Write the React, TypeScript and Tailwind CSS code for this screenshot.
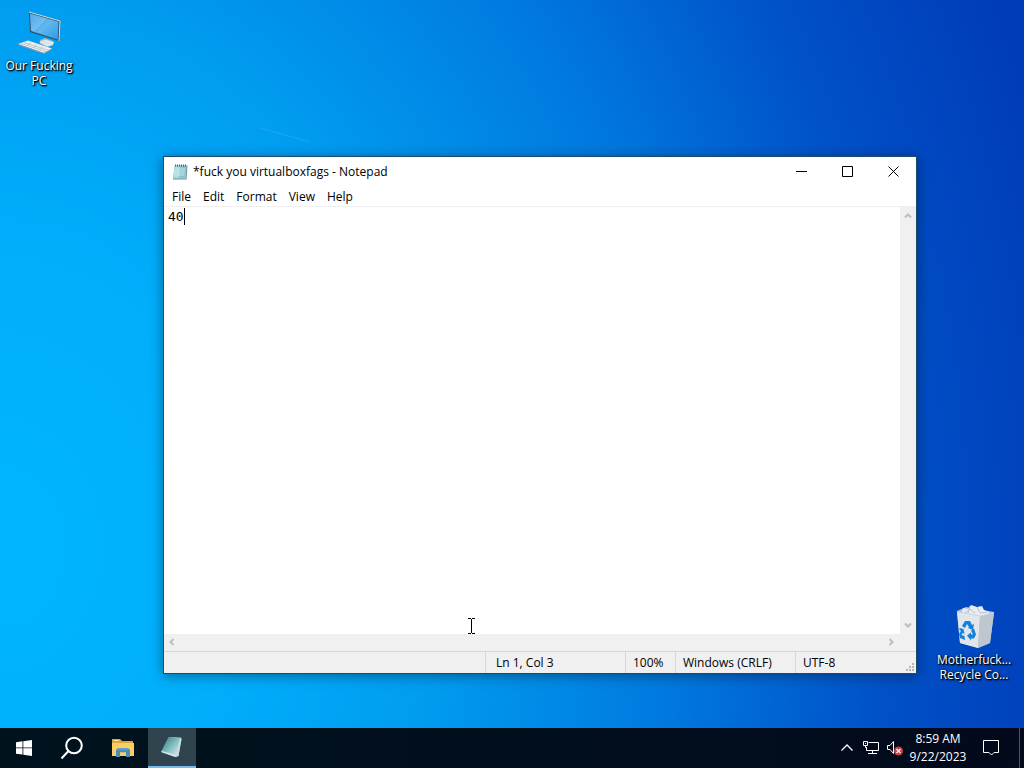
import React from "react";

const menuItems = ["File", "Edit", "Format", "View", "Help"];

function ComputerIcon() {
    return (
        <svg viewBox="0 0 48 48" className="w-12 h-12" aria-hidden="true">
            <defs>
                <linearGradient id="screen" x1="0" y1="0" x2="1" y2="1">
                    <stop offset="0" stopColor="#2592de" />
                    <stop offset="0.5" stopColor="#62b6ee" />
                    <stop offset="1" stopColor="#2d9be6" />
                </linearGradient>
            </defs>
            <path d="M25 32l5-2 8 3v4l-5 2-8-3z" fill="#a9b5be" />
            <path d="M24 34l6-2.500 9 2.500-1 3-6 1.500z" fill="#dfe5ea" />
            <path d="M14 4l31 9-1 20-29-9z" fill="#2c4f6a" />
            <path d="M14 4l31 9-1 20" fill="none" stroke="#d5dccb" strokeWidth="1" />
            <path d="M15 5.500l28.500 8.300-.8 17.700-26.700-8.500z" fill="url(#screen)" />
            <path d="M15 5.500l17 5-13 13-3-1z" fill="#a5d9fa" opacity=".35" />
            <path d="M3 36l10-3.500 24 8-8 4.500z" fill="#eceeef" />
            <path d="M3 36l26 9 8-4.500v1l-8 4.500L3 37z" fill="#8f9aa3" />
            <path d="M6 35.500l25 8M9 34.500l25 8M12 37.500l4-3M18 40l4-3M24 42l4-3" stroke="#b0b7bd" strokeWidth=".7" />
        </svg>
    );
}

function RecycleBinIcon() {
    return (
        <svg viewBox="0 0 48 48" className="w-12 h-12" aria-hidden="true">
            <path d="M7 9l9-4 28 5-4 31-12 5-18-5z" fill="#aebfe0" />
            <path d="M11 12l2-6 5 1 3-4 6 2 5-1 2 4 5 2-1 6-11 4z" fill="#e9edf2" />
            <path d="M15 11l5-4 5 4M27 5l3 6 7-1M20 4l-2 7" stroke="#b5c2d2" fill="none" />
            <path d="M7 10l23 4-2 32-18-5z" fill="#e2e5ea" />
            <path d="M30 14l14-3-4 30-12 5z" fill="#c0c6d0" />
            <path d="M7 9.500l23 4.500 14-3.500" fill="none" stroke="#c6d4ea" />
            <g fill="#1482dc">
                <path d="M12 24l3-5h5l2 4 2-1-1 6-5-2 1-1-2-3-2 4z" />
                <path d="M9.500 26l4 1 1 5-2-1-1 2 3 1 .5 4-5-2-1-4 2-3-1.500-1z" />
                <path d="M17 33.500l4-3v2h2l-2-4 3-2 2 6-2 4h-3v2z" />
            </g>
        </svg>
    );
}

function NotepadIcon() {
    return (
        <svg viewBox="0 0 16 16" className="w-4 h-4" aria-hidden="true">
            <path d="M3 1.500h12.500L14.500 15.500H1z" fill="#6c8f97" />
            <path d="M2.500 2h12L13.500 14.500H1z" fill="#a9dce1" />
            <path d="M8 2h6.500l-1 12.500H7z" fill="#86c6ce" />
            <path d="M3 5h10M2.800 7h10M2.500 9h10M2.300 11h10" stroke="#d8f2f3" strokeWidth=".7" />
            <path d="M3 1.500h12" stroke="#51656b" strokeWidth="2" strokeDasharray="1 1" />
        </svg>
    );
}

function WindowControls() {
    const button = "w-[46px] flex items-center justify-center hover:bg-gray-200";
    return (
        <div className="flex self-start h-[29px]">
            <button aria-label="Minimize" className={button}>
                <svg width="11" height="11" viewBox="0 0 11 11" stroke="#000"><path d="M0 5.500h11" /></svg>
            </button>
            <button aria-label="Maximize" className={button}>
                <svg width="11" height="11" viewBox="0 0 11 11" fill="none" stroke="#000"><path d="M.5.500h10v10H.5z" /></svg>
            </button>
            <button aria-label="Close" className={button}>
                <svg width="11" height="11" viewBox="0 0 11 11" stroke="#000"><path d="M.5.500l10 10M10.500.500l-10 10" /></svg>
            </button>
        </div>
    );
}

function ScrollArrow({ label, d }: { label: string; d: string }) {
    return (
        <button aria-label={label} className="w-4 h-4 flex items-center justify-center">
            <svg width="8" height="8" viewBox="0 0 8 8" fill="none" stroke="#bdbdbd" strokeWidth="2">
                <path d={d} />
            </svg>
        </button>
    );
}

function DesktopIcon({ lines, children }: { lines: string[]; children: React.ReactNode }) {
    return (
        <button className="w-[76px] flex flex-col items-center gap-0.5 text-white leading-[15px] [text-shadow:1px_1px_2px_#000,1px_1px_1px_#000,0_0_3px_rgba(0,0,0,0.5)]">
            {children}
            <span>
                {lines.map((line) => (
                    <span key={line} className="block whitespace-nowrap">{line}</span>
                ))}
            </span>
        </button>
    );
}

function NotepadWindow() {
    return (
        <section className="absolute left-[163px] right-[107px] top-[156px] bottom-[54px] flex flex-col bg-white border border-[#1b4a6b] text-black shadow-[0_2px_12px_rgba(0,0,0,0.4)]">
            <header className="h-[30px] flex items-center">
                <span className="pl-2 pr-[5px]"><NotepadIcon /></span>
                <h1 className="flex-1 whitespace-nowrap">*fuck you virtualboxfags - Notepad</h1>
                <WindowControls />
            </header>
            <nav className="h-5 pl-0.5 flex items-center border-b border-[#f0f0f0]">
                {menuItems.map((item) => (
                    <button key={item} className="h-full px-1.5 hover:bg-sky-100">{item}</button>
                ))}
            </nav>
            <div className="flex-1 flex min-h-0">
                <div className="flex-1 relative">
                    <textarea
                        aria-label="Text editor"
                        defaultValue="40"
                        spellCheck={false}
                        className="block w-full h-full resize-none outline-none overflow-hidden pl-1 pt-px font-['DejaVu_Sans_Mono',monospace] text-[13px] leading-[17px] caret-transparent"
                    />
                    <span className="absolute left-5 top-px w-px h-[17px] bg-black" />
                    <svg className="absolute left-[304px] bottom-0 w-[7px] h-4" viewBox="0 0 7 16" fill="none" stroke="#000">
                        <path d="M0 .5h3M4 .5h3M3.500 1v14M0 15.500h3M4 15.500h3" />
                    </svg>
                </div>
                <div className="w-4 flex flex-col justify-between bg-[#f0f0f0] py-px">
                    <ScrollArrow label="Scroll up" d="M1 5.500l3-3 3 3" />
                    <ScrollArrow label="Scroll down" d="M1 2.500l3 3 3-3" />
                </div>
            </div>
            <div className="h-[17px] flex justify-between bg-[#f0f0f0] pr-[17px]">
                <ScrollArrow label="Scroll left" d="M5.500 1l-3 3 3 3" />
                <ScrollArrow label="Scroll right" d="M2.500 1l3 3-3 3" />
            </div>
            <footer className="h-[22px] flex leading-[21px] bg-[#f0f0f0] border-t border-[#d7d7d7] whitespace-nowrap">
                <span className="flex-1" />
                <span className="w-[140px] pl-2.5 border-l border-[#d7d7d7]">Ln 1, Col 3</span>
                <span className="w-[50px] pl-[7px] border-l border-[#d7d7d7]">100%</span>
                <span className="w-[120px] pl-[7px] border-l border-[#d7d7d7]">Windows (CRLF)</span>
                <span className="w-[121px] pl-[7px] border-l border-[#d7d7d7] flex justify-between items-end">
                    UTF-8
                    <svg width="11" height="11" viewBox="0 0 11 11" fill="#b8b8b8">
                        <path d="M7 1h2v2H7zM4 4h2v2H4zM7 4h2v2H7zM1 7h2v2H1zM4 7h2v2H4zM7 7h2v2H7z" />
                    </svg>
                </span>
            </footer>
        </section>
    );
}

function Taskbar() {
    return (
        <footer className="h-10 flex justify-between bg-gradient-to-r from-[#00131d] to-[#020a1c] text-white">
            <div className="flex gap-0.5">
                <div className="flex">
                    <button aria-label="Start" className="w-12 flex items-center justify-center">
                        <svg width="16" height="16" viewBox="0 0 16 16" fill="#fff">
                            <path d="M0 2.300l6.500-1v6.200H0zM7.300 1.200L16 0v7.500H7.300zM0 8.300h6.500v6.300L0 13.700zM7.300 8.300H16V16l-8.700-1.300z" />
                        </svg>
                    </button>
                    <button aria-label="Search" className="w-12 flex items-center justify-center">
                        <svg width="24" height="24" viewBox="0 0 24 24" fill="none" stroke="#fff" strokeWidth="2">
                            <circle cx="14" cy="9.500" r="7.800" />
                            <path d="M8.500 15L1.500 22.500" />
                        </svg>
                    </button>
                </div>
                <button aria-label="File Explorer" className="w-12 flex items-center justify-center">
                    <svg width="24" height="20" viewBox="0 0 24 20">
                        <path d="M2 1h8l2 2h11v15H2z" fill="#e0a63a" />
                        <path d="M4 2h5v1H4z" fill="#fbe3a0" />
                        <path d="M2 5h22v13H2z" fill="#f8cf66" />
                        <path d="M6 12l2-2h10l2 2v7h-4v-4.500h-6V19H6z" fill="#4a8dbd" />
                        <path d="M8 10h10v2H8z" fill="#5f9fca" />
                        <path d="M10 14.500h6V18h-6z" fill="#f8cf66" />
                    </svg>
                </button>
                <button aria-label="Notepad" className="w-12 flex items-center justify-center bg-[#2f444f] border-b-2 border-[#76b9ed]">
                    <svg width="24" height="24" viewBox="0 0 24 24">
                        <defs>
                            <linearGradient id="glass" x1="0" y1="0" x2="1" y2="1">
                                <stop offset="0" stopColor="#2c7479" />
                                <stop offset="0.5" stopColor="#7fbcc0" />
                                <stop offset="1" stopColor="#e7f7f5" />
                            </linearGradient>
                        </defs>
                        <path d="M9 2l12 .5.500 1.500-3 17-3 1z" fill="#aacbce" />
                        <path d="M8.500 2l11.500 1-4 19L1 17z" fill="url(#glass)" />
                        <path d="M1 17l14 5 1-2-14-4z" fill="#d4e4e4" />
                        <path d="M20 3l1.500 1-3 17-3 1z" fill="#c9dcde" />
                    </svg>
                </button>
            </div>
            <div className="flex">
                <button aria-label="Show hidden icons" className="w-6 flex items-center justify-center">
                    <svg width="12" height="8" viewBox="0 0 12 8" fill="none" stroke="#fff" strokeWidth="1.300"><path d="M.5 6.500L6 1l5.500 5.500" /></svg>
                </button>
                <button aria-label="Network" className="w-6 flex items-center justify-center">
                    <svg width="16" height="14" viewBox="0 0 16 14" fill="none" stroke="#fff">
                        <path d="M5.500 1.500h10v8h-12V6.500M9.500 9.500v3M5 12.500h9M.5.500h4v4h-4zM2.500 5v1.500H4M2 2.500h1" />
                    </svg>
                </button>
                <button aria-label="Volume" className="w-6 flex items-center justify-center">
                    <svg width="16" height="16" viewBox="0 0 16 16" fill="none">
                        <path d="M.5 5.500H3l3.500-4v12l-3.500-4H.5z" stroke="#fff" />
                        <circle cx="11.500" cy="11" r="4.500" fill="#cf3a3e" />
                        <path d="M9.500 9l4 4M13.500 9l-4 4" stroke="#fff" strokeWidth="1.300" />
                    </svg>
                </button>
                <button className="w-[60px] pl-0.5 text-center leading-[18px]">
                    <span className="block">8:59 AM</span>
                    <span className="block">9/22/2023</span>
                </button>
                <button aria-label="Notifications" className="w-12 mr-1 flex items-center justify-center">
                    <svg width="16" height="16" viewBox="0 0 16 16" fill="none" stroke="#fff">
                        <path d="M.5.500h15v12H11L8.500 15 6 12.500H.5z" />
                    </svg>
                </button>
                <button aria-label="Show desktop" className="w-[5px] border-l border-[#4a5664]" />
            </div>
        </footer>
    );
}

export default function App() {
    return (
        <div className="h-screen flex flex-col overflow-hidden font-['Open_Sans','Noto_Sans',sans-serif] text-[12px] leading-4 select-none">
            <main className="flex-1 relative bg-[radial-gradient(ellipse_108%_190%_at_0%_75%,#00b6ff_0%,#00aefc_22%,#009cf0_40%,#0078de_62%,#0052c8_80%,#003cb8_98%)]">
                <svg className="absolute left-[250px] top-[122px] w-[70px] h-6" viewBox="0 0 70 24" stroke="#2ab0fa" strokeWidth="1" opacity=".6">
                    <path d="M10 6l50 14" />
                </svg>
                <div className="absolute left-px top-2">
                    <DesktopIcon lines={["Our Fucking", "PC"]}><ComputerIcon /></DesktopIcon>
                </div>
                <div className="absolute right-3 bottom-[46px]">
                    <DesktopIcon lines={["Motherfuck...", "Recycle Co..."]}><RecycleBinIcon /></DesktopIcon>
                </div>
                <NotepadWindow />
            </main>
            <Taskbar />
        </div>
    );
}
